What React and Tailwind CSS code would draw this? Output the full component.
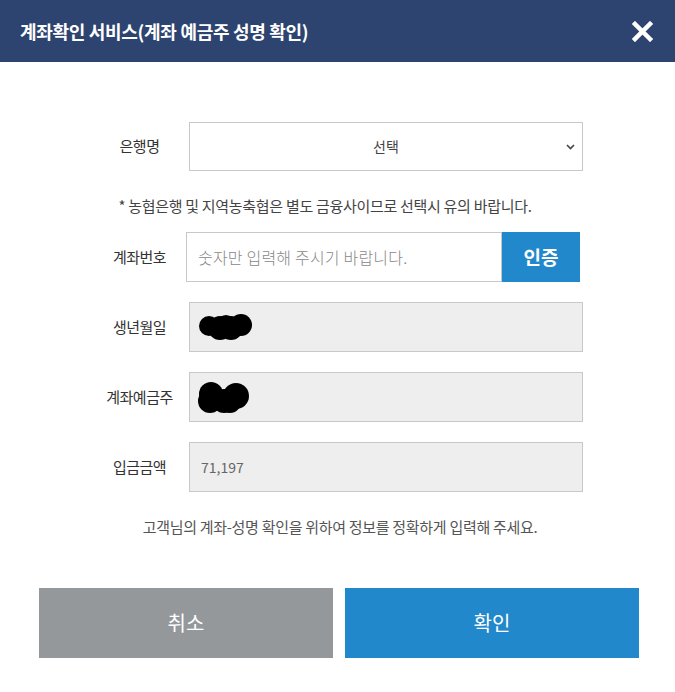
import React from 'react';

const font = { fontFamily: '"Noto Sans CJK KR", "Noto Sans", sans-serif' };

function Blob({ w, h, circles }) {
  return (
    <svg width={w} height={h} viewBox={`0 0 ${w} ${h}`}>
      {circles.map((c, i) => (
        <circle key={i} cx={c[0]} cy={c[1]} r={c[2]} fill="#000" />
      ))}
    </svg>
  );
}

function Row({ label, children, className = '' }) {
  return (
    <div className={`flex items-center ${className}`}>
      <div className="w-[99px] text-center text-[15px] text-[#333] tracking-[-0.5px]">{label}</div>
      {children}
    </div>
  );
}

export default function App() {
  return (
    <div className="w-[675px] h-[692px] bg-white" style={font}>
      <div className="h-[62px] bg-[#2e4470] flex items-center justify-between pl-[20px] pr-[22px]">
        <h1 className="text-white text-[18px] font-bold tracking-[-0.3px]">계좌확인 서비스(계좌 예금주 성명 확인)</h1>
        <svg width="21" height="21" viewBox="0 0 21 21">
          <path d="M3 3 L18 18 M18 3 L3 18" stroke="#fff" strokeWidth="4.5" strokeLinecap="square" />
        </svg>
      </div>

      <div className="pl-[90px] pt-[60px]">
        <Row label="은행명">
          <div className="w-[394px] h-[49px] border border-[#c8c8c8] bg-white relative flex items-center justify-center text-[14px] text-[#444]">
            선택
            <svg className="absolute right-[7px] top-[21px]" width="9" height="6" viewBox="0 0 9 6">
              <path d="M1 1 L4.5 4.5 L8 1" stroke="#444" strokeWidth="1.6" fill="none" />
            </svg>
          </div>
        </Row>

        <p className="w-[470px] text-center text-[15px] text-[#444] tracking-[-0.3px] mt-[24px] mb-[15px] leading-[22px] whitespace-nowrap">
          * 농협은행 및 지역농축협은 별도 금융사이므로 선택시 유의 바랍니다.
        </p>

        <Row label="계좌번호">
          <div className="ml-[-3px] flex h-[50px]">
            <div className="w-[316px] border border-[#c8c8c8] flex items-center pl-[11px] text-[16px] font-light text-[#888] tracking-[0.2px]">
              숫자만 입력해 주시기 바랍니다.
            </div>
            <div className="w-[78px] bg-[#2288cc] flex items-center justify-center text-white text-[19px] font-bold">인증</div>
          </div>
        </Row>

        <Row label="생년월일" className="mt-[20px]">
          <div className="w-[394px] h-[50px] border border-[#c8c8c8] bg-[#eeeeee] flex items-center pl-[6px]">
            <Blob w={60} h={28} circles={[[13, 13, 10], [24, 15, 12], [35, 15, 12], [45, 12, 11], [30, 11, 9]]} />
          </div>
        </Row>

        <Row label="계좌예금주" className="mt-[20px]">
          <div className="w-[394px] h-[50px] border border-[#c8c8c8] bg-[#eeeeee] flex items-center pl-[8px]">
            <Blob w={54} h={32} circles={[[13, 13, 12], [12, 20, 12], [26, 20, 12], [38, 15, 13], [32, 21, 11]]} />
          </div>
        </Row>

        <Row label="입금금액" className="mt-[20px]">
          <div className="w-[394px] h-[50px] border border-[#c8c8c8] bg-[#eeeeee] flex items-center pl-[11px] text-[14px] text-[#666]">
            71,197
          </div>
        </Row>

        <p className="w-[470px] ml-[15px] text-center text-[15px] text-[#555] tracking-[-0.3px] mt-[24px] leading-[22px] whitespace-nowrap">
          고객님의 계좌-성명 확인을 위하여 정보를 정확하게 입력해 주세요.
        </p>
      </div>

      <div className="flex gap-[12px] pl-[39px] mt-[50px]">
        <button className="w-[294px] h-[70px] bg-[#94989b] text-white text-[20px]">취소</button>
        <button className="w-[294px] h-[70px] bg-[#2288cc] text-white text-[20px]">확인</button>
      </div>
    </div>
  );
}
